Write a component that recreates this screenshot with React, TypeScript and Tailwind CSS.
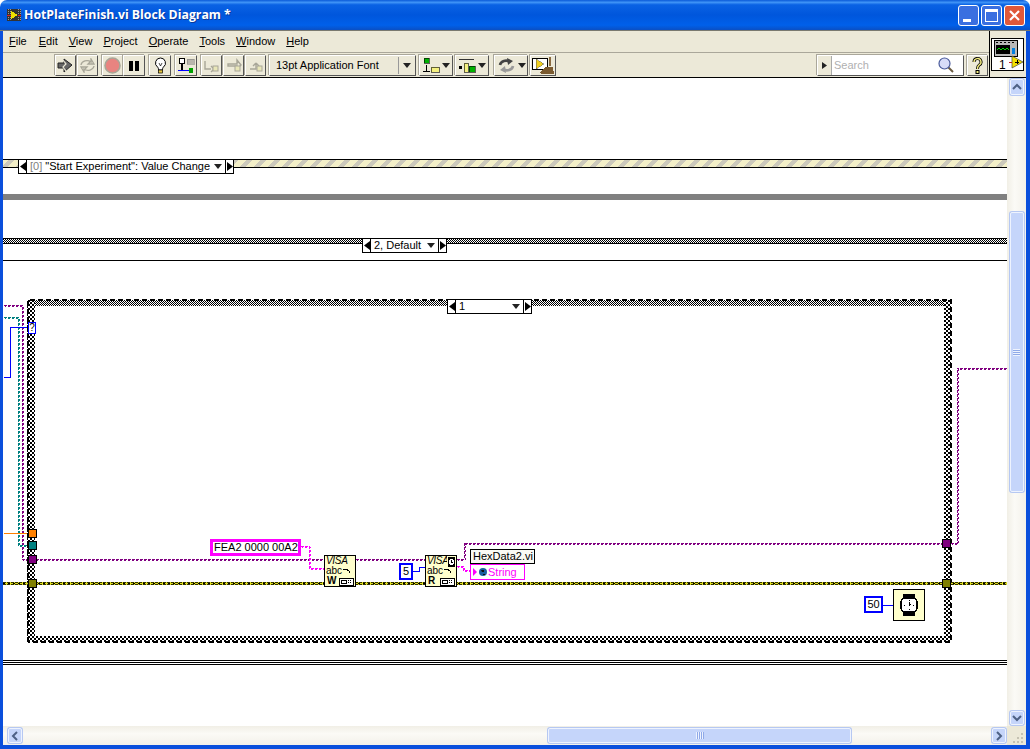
import type { ReactNode } from 'react';

const ui = { fontFamily: '"Liberation Sans", sans-serif' };

function ToolButton({ className, children }: { className: string; children?: ReactNode }) {
  return (
    <div
      className={`h-[21px] shrink-0 flex items-center justify-center bg-[#ece9d8] border border-t-white border-l-white border-r-[#555] border-b-[#555] shadow-[-1px_-1px_0_#aaa79a] ${className}`}
    >
      {children}
    </div>
  );
}

function Caret() {
  return (
    <svg width="8" height="5" viewBox="0 0 8 5" className="shrink-0">
      <path d="M0 0h8L4 5z" fill="#222" />
    </svg>
  );
}

function Chevron({ dir }: { dir: 'up' | 'down' | 'left' | 'right' }) {
  const d = {
    up: 'M2 8l4-4 4 4',
    down: 'M2 4l4 4 4-4',
    left: 'M8 2L4 6l4 4',
    right: 'M4 2l4 4-4 4',
  }[dir];
  return (
    <svg width="12" height="12" viewBox="0 0 12 12">
      <path d={d} fill="none" stroke="#4d6185" strokeWidth="2" />
    </svg>
  );
}

function ScrollButton({ dir, className }: { dir: 'up' | 'down' | 'left' | 'right'; className: string }) {
  return (
    <div className={`flex items-center justify-center rounded-[2px] bg-[#c5d5fa] border border-[#eef3fe] shadow-[0_0_0_1px_#b6c8f2] ${className}`}>
      <Chevron dir={dir} />
    </div>
  );
}

function WindowButton({ className, children }: { className: string; children: ReactNode }) {
  return (
    <div className={`w-[21px] h-[21px] rounded-[3px] border border-white flex items-center justify-center ${className}`}>
      {children}
    </div>
  );
}

function Selector({ className, children }: { className: string; children: ReactNode }) {
  return (
    <div className={`absolute h-[15px] flex bg-white border border-black text-[11px] leading-[13px] text-black ${className}`}>
      <div className="w-[8px] border-r border-black flex items-center justify-center">
        <svg width="6" height="9" viewBox="0 0 6 9"><path d="M6 0v9L0 4.5z" fill="#000" /></svg>
      </div>
      <div className="flex-1 flex items-center justify-between pl-[3px] pr-[3px] whitespace-nowrap overflow-hidden">
        <span>{children}</span>
        <Caret />
      </div>
      <div className="w-[8px] border-l border-black flex items-center justify-center">
        <svg width="6" height="9" viewBox="0 0 6 9"><path d="M0 0v9l6-4.5z" fill="#000" /></svg>
      </div>
    </div>
  );
}

function VisaNode({ className, mode, timer }: { className: string; mode: string; timer?: boolean }) {
  return (
    <div className={`absolute w-[32px] h-[32px] bg-[#ffffcc] border border-black ${className}`}>
      <div className="absolute left-[1px] top-[-1px] text-[10px] leading-[11px] italic tracking-[-0.3px] text-black">VISA</div>
      <div className="absolute left-[1px] top-[9px] text-[10px] leading-[11px] text-black">abc</div>
      <div className="absolute left-[2px] bottom-[0px] text-[10px] leading-[11px] font-bold text-black">{mode}</div>
      <svg className="absolute inset-0" width="30" height="30" viewBox="0 0 30 30" shapeRendering="crispEdges">
        <path d="M18 13h3l3 2v2" fill="none" stroke="#000" />
        <rect x="14" y="22" width="14" height="7" fill="#fff" stroke="#000" />
        <rect x="16" y="24" width="5" height="3" fill="none" stroke="#000" />
        <rect x="23" y="24" width="1" height="1" fill="#000" />
        <rect x="25" y="24" width="1" height="1" fill="#000" />
        <rect x="23" y="26" width="1" height="1" fill="#000" />
        <rect x="25" y="26" width="1" height="1" fill="#000" />
        {timer && (
          <g>
            <rect x="21" y="0" width="9" height="12" fill="#ffffcc" />
            <rect x="22" y="1" width="7" height="2" fill="#000" />
            <rect x="22" y="9" width="7" height="2" fill="#000" />
            <circle cx="25.5" cy="6" r="3.5" fill="#fff" stroke="#000" />
            <path d="M25.5 4v2h1" fill="none" stroke="#000" />
          </g>
        )}
      </svg>
    </div>
  );
}

// LabVIEW draws these wires as a small zigzag: two offset dash rows
function Wire({ d, color }: { d: string; color: string }) {
  return (
    <g fill="none" stroke={color} strokeWidth="1">
      <path d={d} strokeDasharray="3 1" />
      <path d={d} strokeDasharray="2 2" strokeDashoffset="-3" transform="translate(1 1)" />
    </g>
  );
}

function Diagram() {
  return (
    <svg className="absolute inset-0" width="1004" height="648" viewBox="3 78 1004 648" shapeRendering="crispEdges">
      <defs>
        <pattern id="fine" width="2" height="2" patternUnits="userSpaceOnUse">
          <rect width="2" height="2" fill="#fff" />
          <rect width="1" height="1" fill="#000" />
          <rect x="1" y="1" width="1" height="1" fill="#000" />
        </pattern>
        <pattern id="coarse" width="4" height="4" patternUnits="userSpaceOnUse">
          <rect width="4" height="4" fill="#fff" />
          <rect width="2" height="2" fill="#000" />
          <rect x="2" y="2" width="2" height="2" fill="#000" />
        </pattern>
        <pattern id="stripes" width="14" height="8" patternUnits="userSpaceOnUse">
          <rect width="14" height="8" fill="#f3efc8" />
          <path d="M0 8L8 0h6L6 8z" fill="#ccc9bb" />
        </pattern>
      </defs>

      {/* event structure */}
      <rect x="3" y="159" width="1004" height="9" fill="url(#stripes)" />
      <rect x="3" y="159" width="1004" height="1" fill="#000" />
      <rect x="3" y="167" width="1004" height="1" fill="#000" />
      <rect x="3" y="194" width="1004" height="6" fill="#808080" />

      {/* outer case */}
      <rect x="3" y="238" width="1004" height="6" fill="url(#fine)" />
      <rect x="3" y="238" width="1004" height="1" fill="#000" />
      <rect x="3" y="243" width="1004" height="1" fill="#000" />
      <rect x="3" y="260" width="1004" height="1" fill="#000" />
      <rect x="3" y="660" width="1004" height="1" fill="#000" />
      <rect x="3" y="662" width="1004" height="1" fill="#000" />
      <rect x="3" y="664" width="1004" height="1" fill="#000" />

      {/* wires entering from the left */}
      <Wire d="M4 305H22V559H30" color="#800080" />
      <Wire d="M4 317H18V545H28" color="#008080" />
      <path d="M4 377.5H10.5V327.5H28" fill="none" stroke="#0000ff" strokeWidth="1" />
      <path d="M4 533.5H28" fill="none" stroke="#ff8000" strokeWidth="1" />

      {/* inner case frame */}
      <rect x="28" y="300" width="923" height="6" fill="url(#fine)" />
      <rect x="27" y="300" width="8" height="342" fill="url(#coarse)" />
      <rect x="944" y="300" width="7" height="342" fill="url(#coarse)" />
      <rect x="27" y="636" width="924" height="6" fill="url(#coarse)" />
      <path d="M28 642V300H951V642H28" fill="none" stroke="#000" strokeWidth="2" strokeDasharray="5 3" />

      {/* visa session and error */}
      <Wire d="M36 559H324M356 559H425M457 559H464V543H943M951 543H957V368H1007" color="#800080" />
      <rect x="3" y="582" width="1004" height="3" fill="#dcdc20" />
      <line x1="3" y1="583.5" x2="1007" y2="583.5" stroke="#000" strokeWidth="1" strokeDasharray="2 3" />
      <line x1="3" y1="582.5" x2="1007" y2="582.5" stroke="#303000" strokeWidth="1" strokeDasharray="3 1" />
      <line x1="3" y1="584.5" x2="1007" y2="584.5" stroke="#303000" strokeWidth="1" strokeDasharray="3 1" />

      {/* string and numeric wires */}
      <Wire d="M301 546H309V568H324" color="#ff00ff" />
      <Wire d="M457 566H463V570H470" color="#ff00ff" />
      <path d="M412 571.5H419.5V567.5H425" fill="none" stroke="#0000ff" strokeWidth="1" />
      <path d="M883 605.5H893" fill="none" stroke="#0000ff" strokeWidth="1" />

      {/* tunnels */}
      <rect x="28.5" y="529.5" width="8" height="8" fill="#ff8000" stroke="#000" />
      <rect x="28.5" y="541.5" width="8" height="8" fill="#008080" stroke="#000" />
      <rect x="28.5" y="555.5" width="8" height="8" fill="#800080" stroke="#000" />
      <rect x="28.5" y="579.5" width="8" height="8" fill="#808000" stroke="#000" />
      <rect x="942.5" y="539.5" width="8" height="8" fill="#800080" stroke="#000" />
      <rect x="942.5" y="579.5" width="8" height="8" fill="#808000" stroke="#000" />
    </svg>
  );
}

function Canvas() {
  return (
    <div className="relative flex-1 bg-white overflow-hidden" style={ui}>
      <Diagram />

      <Selector className="left-[15px] top-[81px] w-[216px]">
        <span className="text-[#808080]">[0]</span> "Start Experiment": Value Change
      </Selector>
      <Selector className="left-[359px] top-[160px] w-[85px]">2, Default</Selector>
      <Selector className="left-[444px] top-[221px] w-[85px]">1</Selector>

      <div className="absolute left-[25px] top-[244px] w-[8px] h-[12px] bg-white border border-[#0000ff] text-[10px] leading-[10px] text-center text-black">?</div>

      <div className="absolute left-[207px] top-[461px] w-[91px] h-[17px] bg-white border-[3px] border-[#ff00ff] pl-[1px] text-[11px] leading-[11px] text-black whitespace-nowrap">FEA2 0000 00A2</div>
      <VisaNode className="left-[321px] top-[477px]" mode="W" />
      <VisaNode className="left-[422px] top-[477px]" mode="R" timer />
      <div className="absolute left-[396px] top-[485px] w-[14px] h-[17px] bg-white border-2 border-[#0000ff] text-[11px] leading-[13px] text-center text-black">5</div>

      <div className="absolute left-[467px] top-[471px] w-[65px] h-[15px] bg-[#fafaf5] border border-black pl-[2px] text-[11px] leading-[13px] text-black whitespace-nowrap">HexData2.vi</div>
      <div className="absolute left-[467px] top-[486px] w-[55px] h-[16px] bg-white border-[1.5px] border-[#ff00ff] flex items-center gap-[1px] pl-[2px] text-[11px] text-[#ff00ff] whitespace-nowrap">
        <svg width="14" height="10" viewBox="0 0 14 10" className="shrink-0">
          <path d="M0 1l4 4-4 4z" fill="#ff00ff" />
          <circle cx="10" cy="5" r="4" fill="#1b5fa0" />
          <path d="M8 3h3v2H9zM10 7h2v1h-2z" fill="#111" />
        </svg>
        String
      </div>

      <div className="absolute left-[861px] top-[518px] w-[19px] h-[17px] bg-white border-2 border-[#0000ff] text-[11px] leading-[13px] text-center text-black">50</div>
      <div className="absolute left-[890px] top-[511px] w-[32px] h-[32px] bg-[#ffffcc] border border-black flex items-center justify-center">
        <svg width="18" height="22" viewBox="0 0 18 22" shapeRendering="crispEdges">
          <rect x="3" y="0" width="12" height="4" fill="#000" />
          <rect x="3" y="18" width="12" height="4" fill="#000" />
          <rect x="1" y="4" width="16" height="14" rx="4" fill="#fff" stroke="#000" strokeWidth="1.5" />
          <rect x="17" y="10" width="1" height="2" fill="#000" />
          <path d="M9 6v1M9 15v1M4 11h1M13 11h1M9 8v4M10 10h1" stroke="#000" fill="none" />
        </svg>
      </div>
    </div>
  );
}

function VerticalScrollbar() {
  return (
    <div className="w-[19px] flex flex-col items-center pt-[1px] bg-[linear-gradient(90deg,#f1efe6,#fbfaf6_40%,#f3f1ea)]">
      <ScrollButton dir="up" className="w-[14px] h-[16px]" />
      <div className="mt-[117px] w-[14px] h-[280px] rounded-[2px] bg-[#c5d5fa] border border-[#eef3fe] shadow-[0_0_0_1px_#b6c8f2] flex items-center justify-center">
        <div className="w-[7px] h-[7px] bg-[repeating-linear-gradient(180deg,#eef3fe_0_1px,#8fa9e8_1px_2px)]" />
      </div>
      <div className="flex-1" />
      <ScrollButton dir="down" className="w-[14px] h-[14px] mb-[1px]" />
    </div>
  );
}

function HorizontalScrollbar() {
  return (
    <div className="h-[19px] flex items-center bg-[linear-gradient(180deg,#f1efe6,#fbfaf6_40%,#f3f1ea)]">
      <ScrollButton dir="left" className="ml-[5px] w-[14px] h-[15px]" />
      <div className="ml-[526px] w-[303px] h-[15px] rounded-[2px] bg-[#c5d5fa] border border-[#eef3fe] shadow-[0_0_0_1px_#b6c8f2] flex items-center justify-center">
        <div className="w-[8px] h-[7px] bg-[repeating-linear-gradient(90deg,#eef3fe_0_1px,#8fa9e8_1px_2px)]" />
      </div>
      <div className="flex-1" />
      <ScrollButton dir="right" className="w-[14px] h-[15px] mr-[1px]" />
      <div className="w-[19px] h-full flex items-end justify-end p-[2px] bg-[#ece9d8]">
        <svg width="11" height="11" viewBox="0 0 11 11" shapeRendering="crispEdges">
          <path d="M8 1h2v2H8zM4 5h2v2H4zM8 5h2v2H8zM0 9h2v2H0zM4 9h2v2H4zM8 9h2v2H8z" fill="#c5c2b2" />
        </svg>
      </div>
    </div>
  );
}

function Toolbar() {
  return (
    <div className="h-[26px] flex items-start pt-[3px] pl-[52px] border-b border-black border-t border-t-[#aaa79a] bg-[#ece9d8] text-black">
      <ToolButton className="w-[21px] -mt-[1px]">
        <svg width="17" height="15" viewBox="0 0 17 15">
          <path d="M1 5h6V1l8 6-8 7v-4H1z" fill="#666" stroke="#222" />
          <path d="M6 2l3 4-3 3 3 4" fill="none" stroke="#ece9d8" strokeWidth="1.2" />
        </svg>
      </ToolButton>
      <ToolButton className="w-[21px] ml-[1px] -mt-[1px]">
        <svg width="17" height="15" viewBox="0 0 17 15">
          <path d="M2 7a6 5 0 0 1 10-3V1l3 5h-6l2-2M15 8a6 5 0 0 1-10 3v3l-3-5h6l-2 2" fill="none" stroke="#a8a698" strokeWidth="1.3" />
        </svg>
      </ToolButton>
      <ToolButton className="w-[21px] ml-[4px] -mt-[1px]">
        <svg width="17" height="17" viewBox="0 0 17 17">
          <circle cx="8.5" cy="8.5" r="7.5" fill="#e88480" stroke="#a8a698" strokeWidth="1.6" />
        </svg>
      </ToolButton>
      <ToolButton className="w-[22px] ml-[0px] -mt-[1px]">
        <svg width="12" height="12" viewBox="0 0 12 12" shapeRendering="crispEdges">
          <rect x="1" y="1" width="4" height="10" fill="#000" />
          <rect x="7" y="1" width="4" height="10" fill="#000" />
        </svg>
      </ToolButton>
      <ToolButton className="w-[22px] ml-[4px] -mt-[1px]">
        <svg width="13" height="17" viewBox="0 0 13 17">
          <path d="M6.5 1a5 5 0 0 0-3 9c1 1 1 2 1 3h4c0-1 0-2 1-3a5 5 0 0 0-3-9z" fill="#fff" stroke="#000" />
          <rect x="4.5" y="13" width="4" height="3" fill="#e8c840" stroke="#000" strokeWidth="0.7" />
          <path d="M5 6l1.5 3L8 6" fill="none" stroke="#000" strokeWidth="0.7" />
        </svg>
      </ToolButton>
      <ToolButton className="w-[22px] ml-[4px] -mt-[1px]">
        <svg width="18" height="17" viewBox="0 0 18 17" shapeRendering="crispEdges">
          <circle cx="5" cy="4" r="3" fill="#fff" stroke="#000" />
          <rect x="4" y="7" width="2" height="6" fill="#000" />
          <rect x="10" y="2" width="7" height="5" fill="#b8b6ac" stroke="#777" strokeWidth="0.5" />
          <rect x="1" y="13" width="11" height="1" fill="#0000ff" />
          <rect x="12" y="11" width="4" height="5" fill="#00a000" />
        </svg>
      </ToolButton>
      {['M2 4v8h6M8 9l3 3-3 3', 'M3 7h9V3l4 5-4 4V9H3z', 'M3 12h6V6M9 6l-3 3M9 6l3 3'].map((d, i) => (
        <ToolButton key={d} className={i === 0 ? 'w-[21px] ml-[4px] -mt-[1px]' : 'w-[21px] ml-[1px] -mt-[1px]'}>
          <svg width="17" height="17" viewBox="0 0 17 17">
            <path d={d} fill="none" stroke="#a8a698" strokeWidth="1.4" />
            <rect x="10" y="9" width="5" height="5" fill="#e8e6b8" stroke="#a8a698" />
          </svg>
        </ToolButton>
      ))}
      <ToolButton className="w-[147px] ml-[3px] -mt-[1px] !justify-start">
        <span className="pl-[6px] pb-[2px] flex-1 text-[11px] leading-[14px] whitespace-nowrap">13pt Application Font</span>
        <span className="w-[17px] h-[17px] border-l border-[#999] flex items-center justify-center"><Caret /></span>
      </ToolButton>
      <ToolButton className="w-[34px] ml-[3px] -mt-[1px] gap-[2px]">
        <svg width="17" height="15" viewBox="0 0 17 15" shapeRendering="crispEdges">
          <rect x="1" y="0" width="5" height="5" fill="#00b000" stroke="#000" strokeWidth="0.6" />
          <rect x="8" y="9" width="8" height="5" fill="#f4f080" stroke="#000" strokeWidth="0.6" />
          <rect x="0" y="13" width="7" height="1" fill="#000" />
          <rect x="3" y="7" width="1" height="6" fill="#000" />
        </svg>
        <Caret />
      </ToolButton>
      <ToolButton className="w-[34px] ml-[2px] -mt-[1px] gap-[2px]">
        <svg width="18" height="15" viewBox="0 0 18 15" shapeRendering="crispEdges">
          <rect x="1" y="1" width="15" height="1" fill="#333" />
          <rect x="1" y="8" width="3" height="3" fill="#000" />
          <rect x="6" y="5" width="4" height="9" fill="#f4f080" stroke="#000" strokeWidth="0.6" />
          <rect x="11" y="8" width="6" height="6" fill="#00b000" stroke="#000" strokeWidth="0.6" />
        </svg>
        <Caret />
      </ToolButton>
      <ToolButton className="w-[34px] ml-[5px] -mt-[1px] gap-[2px]">
        <svg width="19" height="15" viewBox="0 0 19 15">
          <path d="M3 7a6 5 0 0 1 10-3" fill="none" stroke="#444" strokeWidth="2.6" />
          <path d="M10 0l6 3-5 4z" fill="#444" />
          <path d="M16 8a6 5 0 0 1-10 3" fill="none" stroke="#999" strokeWidth="2.6" />
          <path d="M9 15l-6-3 5-4z" fill="#999" />
        </svg>
        <Caret />
      </ToolButton>
      <ToolButton className="w-[26px] ml-[2px] -mt-[1px]">
        <svg width="23" height="19" viewBox="0 0 23 19" shapeRendering="crispEdges">
          <rect x="0.5" y="2.5" width="15" height="11" fill="#fff" stroke="#000" />
          <path d="M4 3l8 5-8 5z" fill="#f0d020" stroke="#555" strokeWidth="0.5" />
          <rect x="17" y="1" width="2" height="9" fill="#8a6a40" />
          <path d="M8 17l5-6h8l1 7H9z" fill="#7a5a30" />
        </svg>
      </ToolButton>
      <div className="ml-[261px] -mt-[1px] w-[147px] h-[21px] bg-white border border-t-white border-l-white border-r-[#555] border-b-[#555] shadow-[-1px_-1px_0_#aaa79a] flex items-center">
        <div className="w-[14px] h-full bg-[#ece9d8] border-r border-[#aaa] flex items-center justify-center">
          <svg width="5" height="7" viewBox="0 0 5 7"><path d="M0 0v7l5-3.5z" fill="#222" /></svg>
        </div>
        <span className="pl-[2px] flex-1 text-[11px] text-[#b0b0b0]">Search</span>
        <svg width="17" height="17" viewBox="0 0 17 17" className="mr-[8px]">
          <path d="M10 10l5 5" stroke="#6a5a40" strokeWidth="2" />
          <circle cx="6.5" cy="6.5" r="5.5" fill="#d8dcf8" stroke="#4a5a9a" strokeWidth="1.2" />
        </svg>
      </div>
      <ToolButton className="w-[21px] ml-[3px] -mt-[1px]">
        <svg width="11" height="17" viewBox="0 0 11 17">
          <path d="M2 5a3.5 3.5 0 1 1 5 3.2C5.8 9 5.5 10 5.5 12" fill="none" stroke="#000" strokeWidth="3" />
          <path d="M2 5a3.5 3.5 0 1 1 5 3.2C5.8 9 5.5 10 5.5 12" fill="none" stroke="#f4ee80" strokeWidth="1.4" />
          <rect x="4" y="13.5" width="3" height="3" fill="#f4ee80" stroke="#000" />
        </svg>
      </ToolButton>
    </div>
  );
}

function ViIcon() {
  return (
    <div className="w-[37px] border-l border-black border-b bg-[#ece9d8] pt-[7px] pl-[1px]">
      <div className="relative w-[33px] h-[33px] bg-white border border-black">
        <svg className="absolute left-[1px] top-[1px]" width="36" height="32" viewBox="0 0 36 32" shapeRendering="crispEdges">
          <rect x="1" y="0" width="23" height="16" fill="#b8b8b8" stroke="#000" />
          <rect x="3" y="5" width="14" height="9" fill="#000" />
          <path d="M4 10l2-2 2 2 2-2 2 2 2-2 2 2" fill="none" stroke="#00e000" />
          <rect x="19" y="8" width="3" height="6" fill="#0080e0" />
          <path d="M3 2h2M7 2h2M11 2h2M15 2h2M19 2h2" stroke="#000" />
          <path d="M19 16l11 6-11 6z" fill="#f4e000" stroke="#444" strokeWidth="0.7" shapeRendering="auto" />
          <path d="M16 22h3M30 22h0" stroke="#c02020" />
          <path d="M22 22h4M24 20v4" stroke="#000" />
        </svg>
        <span className="absolute left-[7px] bottom-[-2px] text-[12px] leading-[14px] text-black">1</span>
      </div>
    </div>
  );
}

const menus = [
  ['F', 'ile', 'ml-[6px]'],
  ['E', 'dit', 'ml-[12px]'],
  ['V', 'iew', 'ml-[11px]'],
  ['P', 'roject', 'ml-[11px]'],
  ['O', 'perate', 'ml-[11px]'],
  ['T', 'ools', 'ml-[11px]'],
  ['W', 'indow', 'ml-[11px]'],
  ['H', 'elp', 'ml-[11px]'],
];

export default function App() {
  return (
    <div className="w-[1030px] h-[749px] flex flex-col overflow-hidden bg-white rounded-t-[7px]">
      <div className="h-[31px] shrink-0 flex items-center pl-[7px] pr-[5px] border-b border-[#7a7a70] bg-[linear-gradient(180deg,#0a5ad8_0%,#3f93f6_8%,#0a62e4_16%,#0056dc_50%,#0060ea_84%,#0a4fc4_100%)]">
        <svg width="14" height="14" viewBox="0 0 14 14" shapeRendering="crispEdges" className="shrink-0">
          <rect x="0" y="1" width="14" height="12" fill="#333" />
          <path d="M1 1v12M3 1v12M11 1v12M13 1v12" stroke="#999" strokeDasharray="1 1" />
          <path d="M4 3l7 4-7 4z" fill="#f0e000" />
          <rect x="0" y="7" width="4" height="1" fill="#e02020" />
          <rect x="11" y="7" width="3" height="1" fill="#e02020" />
        </svg>
        <span className="ml-[3px] text-[12.3px] font-bold text-white whitespace-nowrap [text-shadow:1px_1px_0_#0a3a9a]" style={{ fontFamily: '"Open Sans", sans-serif' }}>
          HotPlateFinish.vi Block Diagram *
        </span>
        <div className="flex-1" />
        <div className="flex gap-[2px]">
          <WindowButton className="bg-[#3a6fe0]"><div className="w-[8px] h-[3px] bg-white mt-[10px] mr-[4px]" /></WindowButton>
          <WindowButton className="bg-[#3a6fe0]"><div className="w-[13px] h-[13px] border border-t-[3px] border-white" /></WindowButton>
          <WindowButton className="bg-[#e0583a]">
            <svg width="13" height="13" viewBox="0 0 13 13"><path d="M2 2l9 9M11 2l-9 9" stroke="#fff" strokeWidth="2.2" /></svg>
          </WindowButton>
        </div>
      </div>

      <div className="flex-1 flex flex-col min-h-0 border-l-[3px] border-r-[4px] border-b-[4px] border-[#0a4fdc]">
        <div className="h-[47px] shrink-0 flex bg-[#ece9d8]" style={ui}>
          <div className="flex-1 flex flex-col">
            <div className="h-[21px] flex items-center text-[11px] text-black">
              {menus.map(([first, rest, margin]) => (
                <span key={first} className={margin}>
                  <span className="underline">{first}</span>
                  {rest}
                </span>
              ))}
            </div>
            <Toolbar />
          </div>
          <ViIcon />
        </div>
        <div className="flex-1 flex min-h-0">
          <Canvas />
          <VerticalScrollbar />
        </div>
        <HorizontalScrollbar />
      </div>
    </div>
  );
}
